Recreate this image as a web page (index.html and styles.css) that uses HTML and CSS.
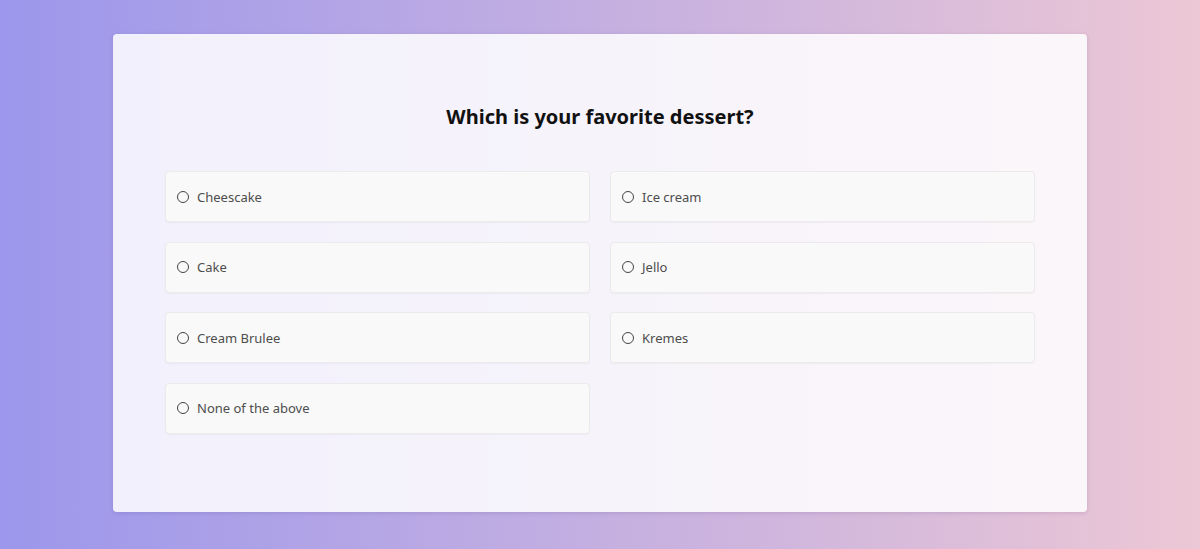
FILE: index.html
```html
<!DOCTYPE html>
<html lang="en">
<head>
  <meta charset="UTF-8">
  <title>Dessert Poll</title>
  <meta name="viewport" content="width=device-width, initial-scale=1">
  <link rel="stylesheet" href="styles.css">
</head>
<body>
  <div class="card">
    <h1>Which is your favorite dessert?</h1>
    <form class="options">
      <label class="option"><input type="radio" name="dessert"><span>Cheescake</span></label>
      <label class="option"><input type="radio" name="dessert"><span>Ice cream</span></label>
      <label class="option"><input type="radio" name="dessert"><span>Cake</span></label>
      <label class="option"><input type="radio" name="dessert"><span>Jello</span></label>
      <label class="option"><input type="radio" name="dessert"><span>Cream Brulee</span></label>
      <label class="option"><input type="radio" name="dessert"><span>Kremes</span></label>
      <label class="option"><input type="radio" name="dessert"><span>None of the above</span></label>
    </form>
  </div>
</body>
</html>
```

FILE: styles.css
```css
body {
  margin: 0;
  height: 549px;
  background: linear-gradient(90deg, #9c97ec 0%, #ecc7d5 100%);
  font-family: 'Noto Sans', 'Open Sans', sans-serif;
  display: flex;
  justify-content: center;
  align-items: flex-start;
}
.card {
  margin-top: 34px;
  width: 974px;
  height: 478px;
  box-sizing: border-box;
  padding: 0 52px;
  background: rgba(255, 255, 255, 0.85);
  border-radius: 4px;
  box-shadow: 0 1px 4px rgba(80, 60, 120, 0.18);
}
h1 {
  margin: 0;
  padding-top: 69px;
  height: 68px;
  box-sizing: content-box;
  text-align: center;
  font-size: 20px;
  font-weight: 700;
  color: #111;
  line-height: 28px;
}
.options {
  display: grid;
  grid-template-columns: 1fr 1fr;
  column-gap: 20px;
  row-gap: 19.5px;
}
.option {
  height: 51px;
  box-sizing: border-box;
  display: flex;
  align-items: center;
  padding-left: 11px;
  background: #f9f9f9;
  border: 1px solid #ebebeb;
  border-radius: 4px;
  box-shadow: 0 1px 2px rgba(0, 0, 0, 0.04);
  color: #4d4d4d;
  font-size: 13px;
  cursor: pointer;
}
.option input {
  appearance: none;
  -webkit-appearance: none;
  width: 12px;
  height: 12px;
  margin: 0 8px 0 0;
  border: 1px solid #444;
  border-radius: 50%;
  background: transparent;
}
.option input:checked {
  background: radial-gradient(circle, #444 40%, transparent 45%);
}
```
